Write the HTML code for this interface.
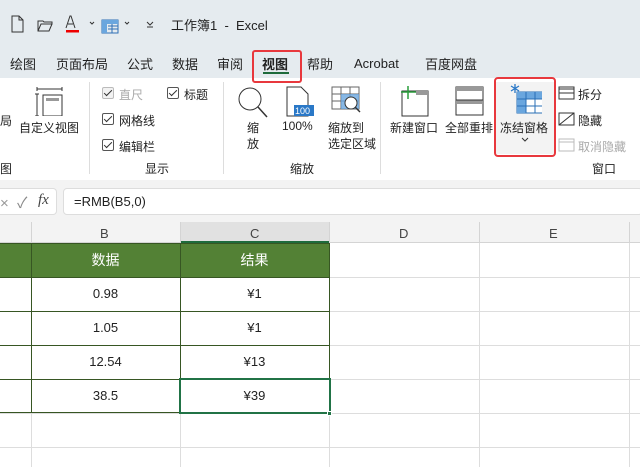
<!DOCTYPE html><html><head><meta charset="utf-8"><style>
*{margin:0;padding:0;box-sizing:border-box}
body{width:640px;height:467px;overflow:hidden;background:#fff;font-family:"Liberation Sans","Noto Sans CJK SC",sans-serif;font-size:12px;color:#222;position:relative}
.a{position:absolute;white-space:nowrap}
.cb{position:absolute;width:12px;height:12px;border:1px solid #555;border-radius:2px;background:#fff}
.cb::after{content:"";position:absolute;left:3px;top:0px;width:3px;height:7px;border:solid #333;border-width:0 1.3px 1.3px 0;transform:rotate(45deg)}
.g{position:absolute;background:#d4d4d4}
.cell{position:absolute;text-align:center;font-size:13px;line-height:34px}
</style></head><body>
<div class="a" style="left:0;top:0;width:640px;height:78px;background:#e5ebef"></div>
<svg class="a" style="left:10px;top:14px" width="150" height="20">
<path d="M2 2h7l4 4v12H2z M9 2v4h4" fill="none" stroke="#333" stroke-width="1"/>
<path d="M28 7h5l1 1h8v2h-11l-3 7z M28 7v10h11l3-7" fill="none" stroke="#333"/>
<path d="M56 14l4-12h1l4 12M58 10h5" fill="none" stroke="#333"/><rect x="56" y="16" width="13" height="2.5" fill="#e00"/>
<path d="M80 8l2 2 2-2" fill="none" stroke="#333"/>
<rect x="92" y="6" width="16" height="13" fill="none" stroke="#2f6fb5"/><rect x="92" y="6" width="5" height="13" fill="#6aa6de"/><rect x="92" y="6" width="16" height="4" fill="#6aa6de"/>
<path d="M98 12h10M98 15h10M102 10v9" stroke="#2f6fb5"/>
<path d="M115 8l2 2 2-2M137 8l3 3 3-3M137 13h6" fill="none" stroke="#333"/>
</svg>
<div class="a" style="left:171px;top:15px;font-size:13px">工作簿1 &nbsp;- &nbsp;Excel</div>
<div class="a" style="top:54px;left:10px;font-size:13px">绘图</div>
<div class="a" style="top:54px;left:56px;font-size:13px">页面布局</div>
<div class="a" style="top:54px;left:127px;font-size:13px">公式</div>
<div class="a" style="top:54px;left:172px;font-size:13px">数据</div>
<div class="a" style="top:54px;left:217px;font-size:13px">审阅</div>
<div class="a" style="top:54px;left:262px;font-size:13px;font-weight:bold">视图</div>
<div class="a" style="left:263px;top:72px;width:26px;height:2px;background:#1e6b3c"></div>
<div class="a" style="left:252px;top:50px;width:50px;height:33px;border:2px solid #e8383d;border-radius:3px"></div>
<div class="a" style="top:54px;left:307px;font-size:13px">帮助</div>
<div class="a" style="top:56px;left:354px;font-size:13px">Acrobat</div>
<div class="a" style="top:54px;left:425px;font-size:13px">百度网盘</div>
<div class="a" style="left:0;top:112px">局</div>
<svg class="a" style="left:34px;top:86px" width="30" height="30"><path d="M3 3h25M3 1v4M28 1v4M3 8v22M1 8h4M1 30h4" stroke="#333" fill="none"/><rect x="9" y="9" width="19" height="21" fill="none" stroke="#333"/><rect x="12" y="12" width="13" height="3" fill="#999"/></svg>
<div class="a" style="left:19px;top:119px">自定义视图</div>
<div class="a" style="left:0;top:160px">图</div>
<div class="a" style="left:89px;top:82px;width:1px;height:92px;background:#ddd"></div>
<div class="cb" style="left:102px;top:87px;border-color:#bbb;background:#f2f2f2"></div><div class="a" style="left:119px;top:86px;color:#aaa">直尺</div>
<div class="cb" style="left:167px;top:87px"></div><div class="a" style="left:184px;top:86px">标题</div>
<div class="cb" style="left:102px;top:113px"></div><div class="a" style="left:119px;top:112px">网格线</div>
<div class="cb" style="left:102px;top:139px"></div><div class="a" style="left:119px;top:138px">编辑栏</div>
<div class="a" style="left:145px;top:160px">显示</div>
<div class="a" style="left:223px;top:82px;width:1px;height:92px;background:#ddd"></div>
<svg class="a" style="left:237px;top:86px" width="34" height="32"><circle cx="13" cy="13" r="11" fill="none" stroke="#333"/><path d="M21 21l9 10" stroke="#333" stroke-width="1.5"/></svg>
<div class="a" style="left:247px;top:120px;line-height:16px">缩<br>放</div>
<svg class="a" style="left:285px;top:86px" width="30" height="32"><path d="M2 1h14l7 7v22H2z" fill="#fff" stroke="#333"/><rect x="9" y="19" width="20" height="11" fill="#2a78c7"/><text x="10" y="28" font-size="9" fill="#fff" font-family="Liberation Sans">100</text></svg>
<div class="a" style="left:282px;top:119px">100%</div>
<svg class="a" style="left:331px;top:86px" width="32" height="32"><rect x="1" y="1" width="27" height="22" fill="none" stroke="#666"/><path d="M1 8h27M1 15h27M10 1v22M19 1v22" stroke="#666"/><rect x="10" y="8" width="18" height="15" fill="#6aa6de" opacity=".8"/><circle cx="20" cy="17" r="6" fill="#fff" stroke="#333"/><path d="M24 21l5 5" stroke="#333" stroke-width="1.4"/></svg>
<div class="a" style="left:328px;top:120px;line-height:16px">缩放到<br>选定区域</div>
<div class="a" style="left:290px;top:160px">缩放</div>
<div class="a" style="left:380px;top:82px;width:1px;height:92px;background:#ddd"></div>
<svg class="a" style="left:398px;top:85px" width="32" height="32"><rect x="4" y="6" width="26" height="25" fill="#fff" stroke="#333"/><rect x="18" y="6" width="12" height="4" fill="#999"/><path d="M10 1v13M3 7h15" stroke="#2a9d3c" stroke-width="1.5"/></svg>
<div class="a" style="left:390px;top:119px">新建窗口</div>
<svg class="a" style="left:455px;top:86px" width="30" height="32"><rect x="1" y="1" width="27" height="28" fill="#fff" stroke="#333"/><rect x="1" y="1" width="27" height="4" fill="#999"/><rect x="1" y="14" width="27" height="4" fill="#999"/><path d="M1 14h27" stroke="#333"/></svg>
<div class="a" style="left:445px;top:119px">全部重排</div>
<div class="a" style="left:496px;top:82px;width:58px;height:72px;background:#f3f3f3"></div>
<svg class="a" style="left:506px;top:84px" width="36" height="30"><rect x="11" y="8" width="28" height="21" fill="#fff" stroke="#2a6fb5"/><rect x="11" y="8" width="28" height="7" fill="#6aa6de"/><rect x="11" y="8" width="9" height="21" fill="#6aa6de"/><path d="M11 15h28M11 22h28M20 8v21M29 8v21" stroke="#2a6fb5"/><path d="M9 0v9M5 2l8 5M5 7l8-5" stroke="#2a78c7" stroke-width="1.3"/></svg>
<div class="a" style="left:500px;top:119px">冻结窗格</div>
<svg class="a" style="left:521px;top:137px" width="8" height="6"><path d="M1 1l3 3 3-3" fill="none" stroke="#333"/></svg>
<div class="a" style="left:494px;top:77px;width:62px;height:80px;border:2px solid #e8383d;border-radius:4px"></div>
<svg class="a" style="left:558px;top:86px" width="18" height="66"><rect x="1" y="1" width="15" height="12" fill="none" stroke="#333"/><path d="M1 7h15M1 3h15" stroke="#333"/><rect x="1" y="27" width="15" height="12" fill="none" stroke="#333"/><path d="M1 39L16 27" stroke="#333"/><rect x="1" y="53" width="15" height="12" fill="none" stroke="#bbb"/><path d="M1 56h15" stroke="#bbb"/></svg>
<div class="a" style="left:578px;top:86px">拆分</div>
<div class="a" style="left:578px;top:112px">隐藏</div>
<div class="a" style="left:578px;top:138px;color:#aaa">取消隐藏</div>
<div class="a" style="left:592px;top:160px">窗口</div>
<div class="a" style="left:0;top:180px;width:640px;height:63px;background:#f3f3f3"></div>
<div class="a" style="left:0;top:188px;width:57px;height:27px;background:#fff;border:1px solid #ddd;border-left:none;border-radius:0 4px 4px 0"></div>
<div class="a" style="left:0;top:192px;color:#999;font-size:15px">×&nbsp; <span style="color:#888">✓</span></div>
<div class="a" style="left:38px;top:192px;font-family:'Liberation Serif',serif;font-style:italic;font-size:15px;color:#444">fx</div>
<div class="a" style="left:63px;top:188px;width:580px;height:27px;background:#fff;border:1px solid #ddd;border-radius:4px"></div>
<div class="a" style="left:74px;top:194px;font-size:13px">=RMB(B5,0)</div>
<div class="a" style="left:0;top:222px;width:640px;height:21px;background:#f3f3f3;border-bottom:1px solid #d4d4d4"></div>
<div class="a" style="left:180px;top:222px;width:149px;height:21px;background:#e1e1e1;border-bottom:2px solid #1e6b3c"></div>
<div class="g" style="left:31px;top:222px;width:1px;height:21px"></div>
<div class="g" style="left:180px;top:222px;width:1px;height:21px"></div>
<div class="g" style="left:329px;top:222px;width:1px;height:21px"></div>
<div class="g" style="left:479px;top:222px;width:1px;height:21px"></div>
<div class="g" style="left:629px;top:222px;width:1px;height:21px"></div>
<div class="a" style="left:100px;top:226px;font-size:13px;color:#444">B</div>
<div class="a" style="left:250px;top:226px;font-size:13px;color:#444">C</div>
<div class="a" style="left:399px;top:226px;font-size:13px;color:#444">D</div>
<div class="a" style="left:549px;top:226px;font-size:13px;color:#444">E</div>
<div class="g" style="left:329px;top:277px;width:311px;height:1px;background:#ddd"></div>
<div class="g" style="left:329px;top:311px;width:311px;height:1px;background:#ddd"></div>
<div class="g" style="left:329px;top:345px;width:311px;height:1px;background:#ddd"></div>
<div class="g" style="left:329px;top:379px;width:311px;height:1px;background:#ddd"></div>
<div class="g" style="left:0;top:413px;width:640px;height:1px;background:#ddd"></div>
<div class="g" style="left:0;top:447px;width:640px;height:1px;background:#ddd"></div>
<div class="g" style="left:31px;top:413px;width:1px;height:54px;background:#ddd"></div>
<div class="g" style="left:180px;top:413px;width:1px;height:54px;background:#ddd"></div>
<div class="g" style="left:329px;top:243px;width:1px;height:224px;background:#ddd"></div>
<div class="g" style="left:479px;top:243px;width:1px;height:224px;background:#ddd"></div>
<div class="g" style="left:629px;top:243px;width:1px;height:224px;background:#ddd"></div>
<div class="a" style="left:0;top:243px;width:330px;height:35px;background:#538135;border:1px solid #375623;border-left:none"></div>
<div class="a" style="left:31px;top:243px;width:1px;height:170px;background:#375623"></div>
<div class="a" style="left:180px;top:243px;width:1px;height:170px;background:#375623"></div>
<div class="a" style="left:329px;top:243px;width:1px;height:170px;background:#375623"></div>
<div class="a" style="left:0;top:311px;width:330px;height:1px;background:#375623"></div>
<div class="a" style="left:0;top:345px;width:330px;height:1px;background:#375623"></div>
<div class="a" style="left:0;top:379px;width:330px;height:1px;background:#375623"></div>
<div class="a" style="left:0;top:412px;width:330px;height:1px;background:#375623"></div>
<div class="cell" style="left:31px;top:243px;width:149px;color:#fff;font-size:14px">数据</div>
<div class="cell" style="left:180px;top:243px;width:149px;color:#fff;font-size:14px">结果</div>
<div class="cell" style="left:31px;top:277px;width:149px">0.98</div>
<div class="cell" style="left:180px;top:277px;width:149px">¥1</div>
<div class="cell" style="left:31px;top:311px;width:149px">1.05</div>
<div class="cell" style="left:180px;top:311px;width:149px">¥1</div>
<div class="cell" style="left:31px;top:345px;width:149px">12.54</div>
<div class="cell" style="left:180px;top:345px;width:149px">¥13</div>
<div class="cell" style="left:31px;top:379px;width:149px">38.5</div>
<div class="cell" style="left:180px;top:379px;width:149px">¥39</div>
<div class="a" style="left:179px;top:378px;width:152px;height:36px;border:2px solid #217346"></div>
<div class="a" style="left:327px;top:411px;width:5px;height:5px;background:#217346;border:1px solid #fff"></div>
</body></html>
